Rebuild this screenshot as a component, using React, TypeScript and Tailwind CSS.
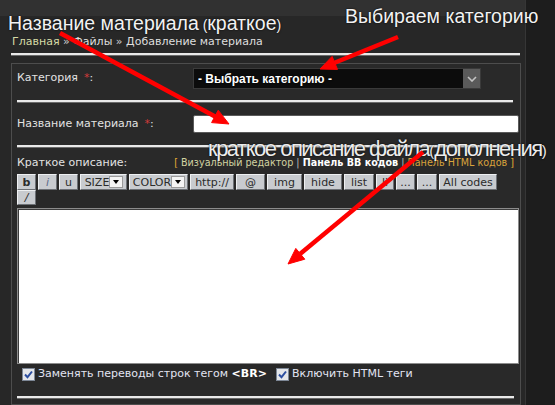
import type { ReactNode } from "react";

// Grey form buttons of the BB-code toolbar
const BTN =
  "flex h-full items-center justify-center border border-t-[#eef0f2] border-l-[#eef0f2] border-b-[#6c7075] border-r-[#6c7075] bg-[#c8cbcf] text-[11px] leading-none text-[#2b2b2b]";

// Double separator line (white over grey)
const RULE = "h-[3px] shrink-0 border-t-2 border-b border-t-[#e9e9e9] border-b-[#6a6a6a]";

function ToolButton({ w, children }: { w: string; children: ReactNode }) {
  return <div className={`${BTN} ${w}`}>{children}</div>;
}

function ToolSelect({ w, label }: { w: string; label: string }) {
  return (
    <div className={`${BTN} ${w} justify-between pl-[2px] pr-[1px]`}>
      <span>{label}</span>
      <span className="flex h-[12px] w-[14px] items-center justify-center border border-[#9a9a9a] bg-[#f4f4f4]">
        <span className="h-0 w-0 border-x-[3.5px] border-t-[4px] border-x-transparent border-t-black" />
      </span>
    </div>
  );
}

function Check() {
  return (
    <span className="flex h-[13px] w-[13px] shrink-0 items-center justify-center border border-[#7d8796] bg-[#e4e6ea]">
      <svg width="11" height="11" viewBox="0 0 11 11">
        <path d="M2 5.5 L4.5 8.2 L9 2.5" fill="none" stroke="#2c4ea0" strokeWidth="2" />
      </svg>
    </span>
  );
}

function Required() {
  return <span className="ml-[6px] text-[#d23a3a]">*</span>;
}

export default function App() {
  return (
    <div className="relative h-[405px] w-[555px] overflow-hidden bg-[#1d1d1d] font-['DejaVu_Sans',sans-serif] text-[11px] text-[#e2e2e2]">
      <div className="flex h-full w-[526px] flex-col border-r border-[#363636] bg-[#272727]">
        <div className="h-4 shrink-0 bg-[#313131]" />

        {/* Breadcrumb */}
        <nav className="ml-3 mt-[19px] leading-[14px]">
          <span className="text-[#d6dba6]">Главная</span>
          <span className="text-[#cfcfcf]"> » </span>
          <span className="text-[#dedede]">Файлы</span>
          <span className="text-[#cfcfcf]"> » </span>
          <span className="text-[#dedede]">Добавление материала</span>
        </nav>
        <div className={`${RULE} ml-[11px] mt-[4px] w-[509px]`} />

        {/* Form frame */}
        <div className="ml-[11px] mt-[7px] flex w-[510px] flex-1 flex-col border border-[#4d4d4d] bg-[#292929] pl-[5px] pr-[1px] pt-[4px]">
          <div className="flex h-[21px] items-center">
            <div className="w-[176px]">
              Категория
              <Required />:
            </div>
            <div className="flex h-[21px] w-[288px] items-stretch border border-[#3a3a3a] bg-[#0c0c0c]">
              <span className="flex flex-1 items-center pl-[4px] font-['Liberation_Sans',sans-serif] text-[12px] font-bold text-white [text-shadow:0_0_2px_#000]">
                - Выбрать категорию -
              </span>
              <span className="flex w-[17px] items-center justify-center bg-[#5a5a5a]">
                <svg width="10" height="6" viewBox="0 0 10 6">
                  <path d="M1 1 L5 5 L9 1" fill="none" stroke="#c4c4c4" strokeWidth="1.6" />
                </svg>
              </span>
            </div>
          </div>

          <div className={`${RULE} mt-[11px] w-[496px]`} />

          <div className="mt-[12px] flex h-[18px] items-center">
            <div className="w-[176px]">
              Название материала
              <Required />:
            </div>
            <div className="h-[18px] flex-1 rounded-[2px] border border-[#5a5a5a] bg-white" />
          </div>

          <div className={`${RULE} mt-[12px] w-[496px]`} />

          <div className="mt-[8px] flex h-[14px] items-center justify-between pr-[5px]">
            <span>Краткое описание:</span>
            <span className="text-[9.6px]">
              <span className="text-[#e6ad34]">[ </span>
              <span className="text-[#d2d3a2]">Визуальный редактор</span>
              <span className="text-[#bdbdbd]"> | </span>
              <span className="font-bold text-white">Панель BB кодов</span>
              <span className="text-[#bdbdbd]"> | </span>
              <span className="text-[#d9a33c]">Панель HTML кодов</span>
              <span className="text-[#e6ad34]"> ]</span>
            </span>
          </div>

          {/* BB code toolbar */}
          <div className="mt-[4px] flex h-[16px] gap-[2px]">
            <ToolButton w="w-[19px]"><b>b</b></ToolButton>
            <ToolButton w="w-[19px]"><i className="text-[#5a6a8a]">i</i></ToolButton>
            <ToolButton w="w-[19px]">u</ToolButton>
            <ToolSelect w="w-[47px]" label="SIZE" />
            <ToolSelect w="w-[59px]" label="COLOR" />
            <ToolButton w="w-[44px]">http://</ToolButton>
            <ToolButton w="w-[29px]">@</ToolButton>
            <ToolButton w="w-[35px]">img</ToolButton>
            <ToolButton w="w-[38px]">hide</ToolButton>
            <ToolButton w="w-[30px]">list</ToolButton>
            <ToolButton w="w-[18px]">li</ToolButton>
            <ToolButton w="w-[19px]">...</ToolButton>
            <ToolButton w="w-[20px]">...</ToolButton>
            <ToolButton w="w-[58px]">All codes</ToolButton>
          </div>
          <div className="flex h-[15px]">
            <ToolButton w="w-[19px]"><i>/</i></ToolButton>
          </div>

          <div className="mt-[3px] h-[156px] w-full shrink-0 border border-[#8c8c8c] bg-white shadow-[inset_1px_1px_0_#3c3c3c]" />

          <div className="mt-[3px] flex h-[14px] items-center text-[#e2e4f2]">
            <div className="flex w-[259px] items-center gap-[3px] pl-[5px]">
              <Check />
              <span>
                Заменять переводы строк тегом <b className="text-white">&lt;BR&gt;</b>
              </span>
            </div>
            <div className="flex items-center gap-[3px]">
              <Check />
              <span>Включить HTML теги</span>
            </div>
          </div>

          <div className={`${RULE} mt-[15px] w-[497px]`} />
        </div>
      </div>

      {/* Annotations drawn over the screenshot */}
      <div className="absolute left-[8px] top-[14px] font-['Liberation_Sans',sans-serif] text-[19.5px] leading-none text-[#f2f2f2] [text-shadow:0_0_2px_#000]">
        Название материала<span className="text-[14px]"> (</span>краткое<span className="text-[14px]">)</span>
      </div>
      <div className="absolute left-[345px] top-[7px] font-['Liberation_Sans',sans-serif] text-[19.5px] leading-none text-[#f2f2f2] [text-shadow:0_0_2px_#000]">
        Выбираем категорию
      </div>
      <div className="absolute left-[208px] top-[138px] font-['Liberation_Sans',sans-serif] text-[22px] leading-none tracking-[-1.5px] text-[#ececec] [text-shadow:0_0_2px_#000]">
        краткое описание файла<span className="text-[15px] tracking-normal">(</span>дополнения<span className="text-[15px] tracking-normal">)</span>
      </div>

      <svg className="pointer-events-none absolute inset-0" width="555" height="405" viewBox="0 0 555 405">
        <g fill="#ff0000" stroke="#ff0000">
          <line x1="60" y1="33" x2="216" y2="117" strokeWidth="4.5" />
          <polygon points="229,124 211.6,122.6 218.2,110.2" strokeWidth="1" />
          <line x1="398" y1="37" x2="334" y2="63" strokeWidth="4.5" />
          <polygon points="320,69 332.1,56.4 337.5,69.4" strokeWidth="1" />
          <line x1="423" y1="152" x2="300" y2="254" strokeWidth="4.5" />
          <polygon points="288,264 295.8,248.4 304.8,259.2" strokeWidth="1" />
        </g>
      </svg>
    </div>
  );
}
